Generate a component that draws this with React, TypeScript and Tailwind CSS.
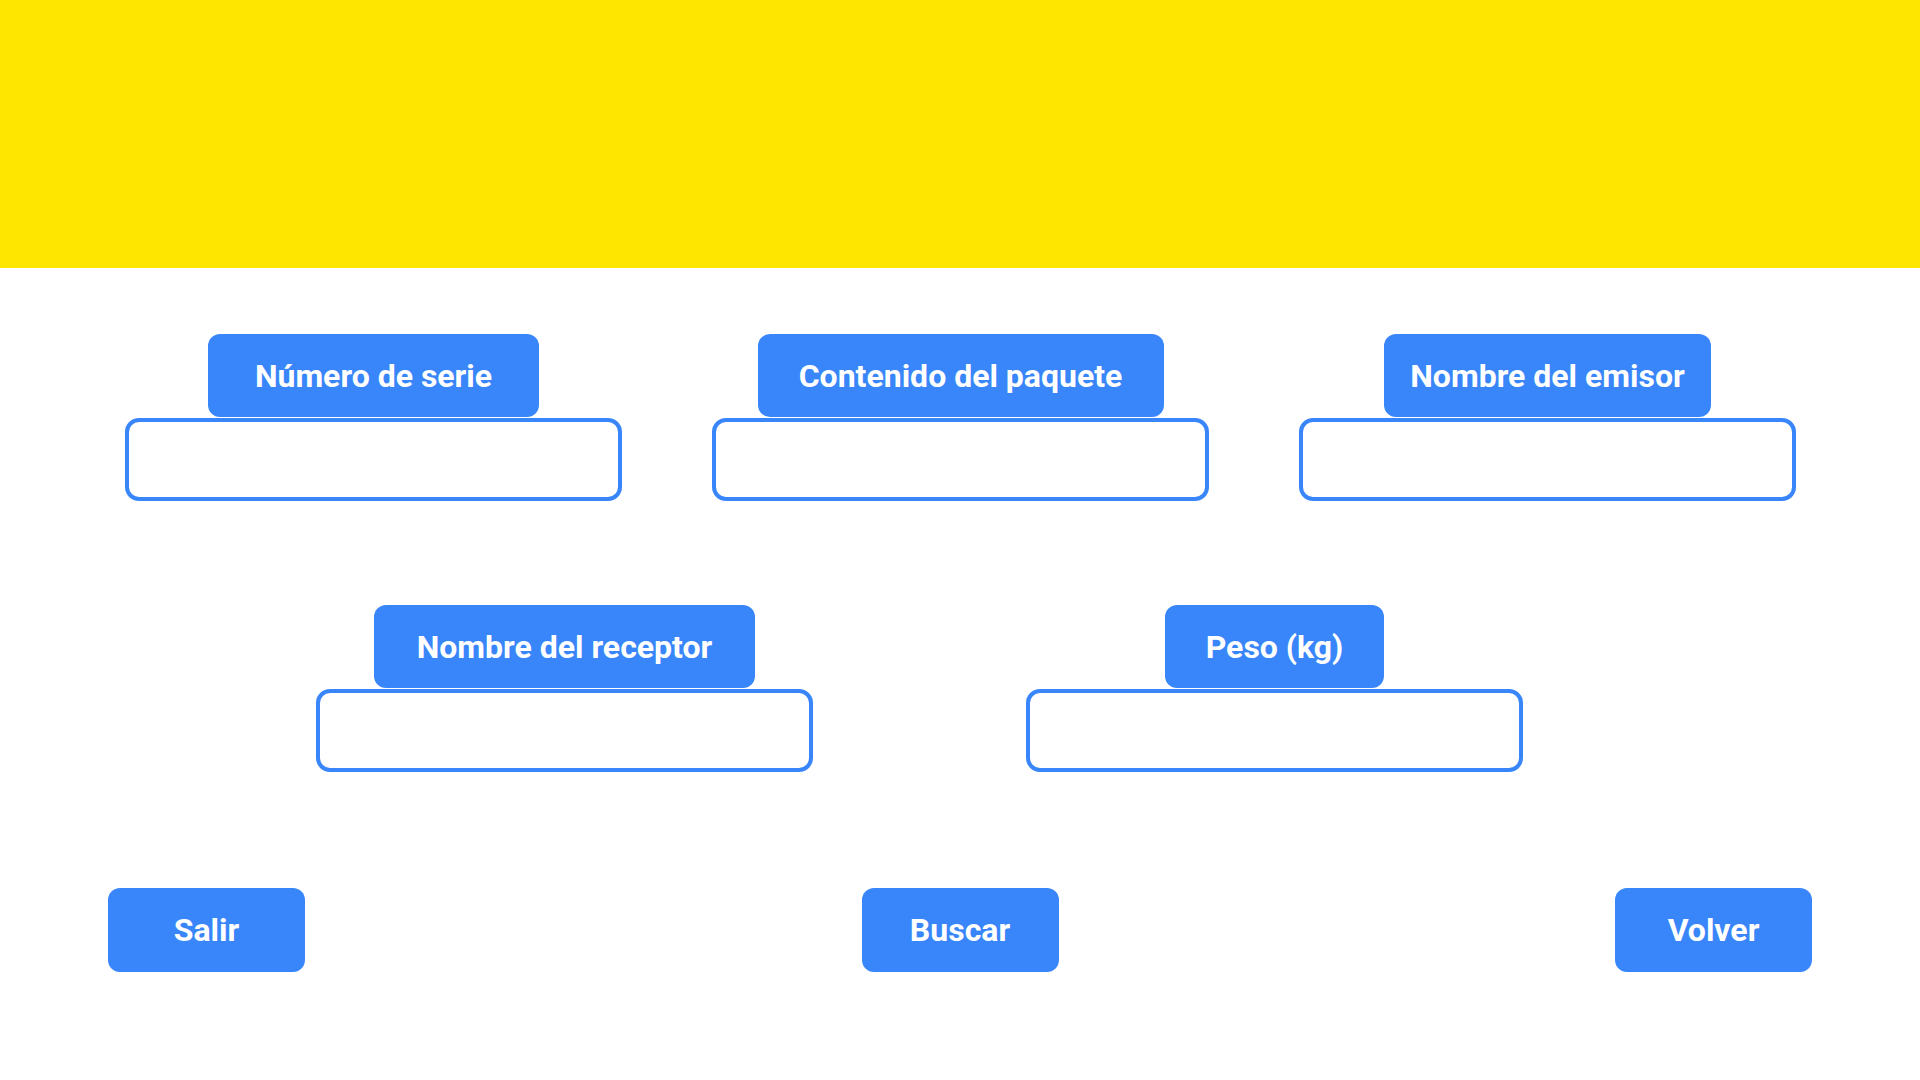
import React from "react";

const font = { fontFamily: "Roboto, 'Liberation Sans', sans-serif" };

function Field({ label, labelW }: { label: string; labelW: string }) {
  return (
    <div className="flex flex-col items-center w-[497px]">
      <div
        className={`${labelW} h-[83px] rounded-[12px] bg-[#3986fb] flex items-center justify-center text-white font-bold text-[32px] leading-none`}
      >
        {label}
      </div>
      <input className="mt-[1px] w-full h-[83px] rounded-[14px] border-4 border-[#3986fb] bg-white outline-none" />
    </div>
  );
}

function Btn({ children }: { children: React.ReactNode }) {
  return (
    <button className="w-[197px] h-[84px] rounded-[12px] bg-[#3986fb] text-white font-bold text-[32px] leading-none flex items-center justify-center">
      {children}
    </button>
  );
}

export default function App() {
  return (
    <div className="w-[1920px] h-[1080px] bg-white overflow-hidden" style={font}>
      <div className="h-[268px] bg-[#ffe600]" />
      <div className="flex pl-[125px] gap-[90px] mt-[66px]">
        <Field label="Número de serie" labelW="w-[331px]" />
        <Field label="Contenido del paquete" labelW="w-[406px]" />
        <Field label="Nombre del emisor" labelW="w-[327px]" />
      </div>
      <div className="flex pl-[316px] gap-[213px] mt-[104px]">
        <Field label="Nombre del receptor" labelW="w-[381px]" />
        <Field label="Peso (kg)" labelW="w-[219px]" />
      </div>
      <div className="flex justify-between px-[108px] mt-[116px]">
        <Btn>Salir</Btn>
        <Btn>Buscar</Btn>
        <Btn>Volver</Btn>
      </div>
    </div>
  );
}
